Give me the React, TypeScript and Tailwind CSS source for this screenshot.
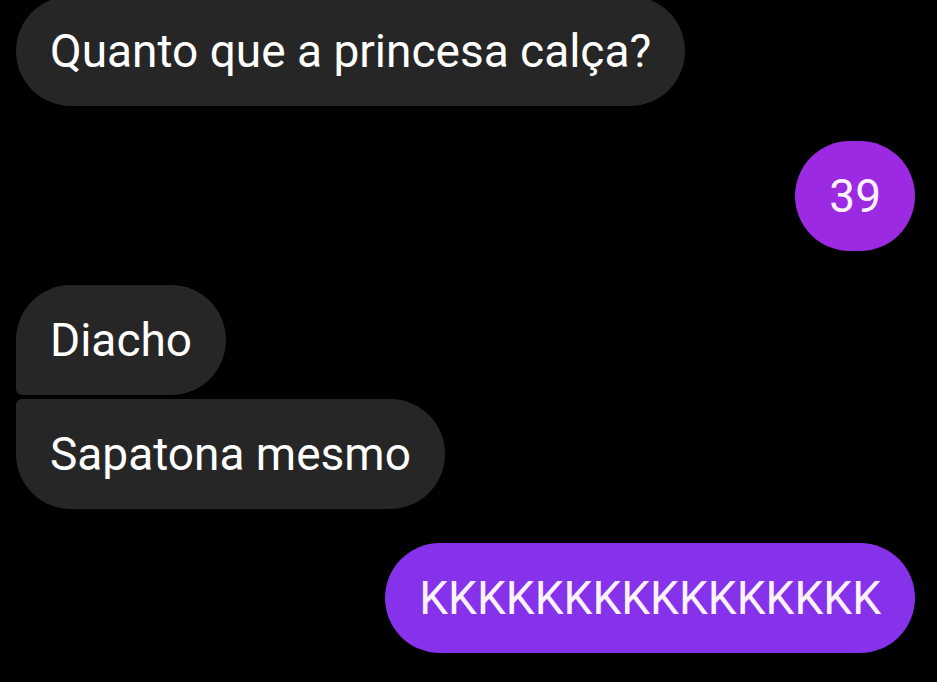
type Msg = {
    text: string
    mine: boolean
    shape: string
    gap: string
    bg?: string
}

const messages: Msg[] = [
    { text: "Quanto que a princesa calça?", mine: false, shape: "rounded-[55px]", gap: "mt-[-4px]" },
    { text: "39", mine: true, shape: "rounded-[55px]", gap: "mt-[35px]", bg: "bg-[#9b2ae2]" },
    { text: "Diacho", mine: false, shape: "rounded-[55px] rounded-bl-[6px]", gap: "mt-[34px]" },
    { text: "Sapatona mesmo", mine: false, shape: "rounded-[55px] rounded-tl-[6px]", gap: "mt-[4px]" },
    { text: "KKKKKKKKKKKKKKKK", mine: true, shape: "rounded-[55px]", gap: "mt-[34px]", bg: "bg-[#8632eb]" },
]

export default function App() {
    return (
        <div
            className="w-[937px] h-[682px] overflow-hidden bg-black flex flex-col pl-4 pr-[22px]"
            style={{ fontFamily: "Roboto, 'Noto Sans', sans-serif" }}
        >
            {messages.map((m, i) => (
                <div
                    key={i}
                    className={`flex ${m.mine ? "justify-end" : "justify-start"} ${m.gap}`}
                >
                    <div
                        className={`h-[110px] shrink-0 flex items-center px-[34px] text-[46px] leading-none whitespace-nowrap ${m.shape} ${
                            m.mine ? `${m.bg} text-[#fdf2ff]` : "bg-[#262626] text-white"
                        }`}
                    >
                        {m.text}
                    </div>
                </div>
            ))}
        </div>
    )
}
